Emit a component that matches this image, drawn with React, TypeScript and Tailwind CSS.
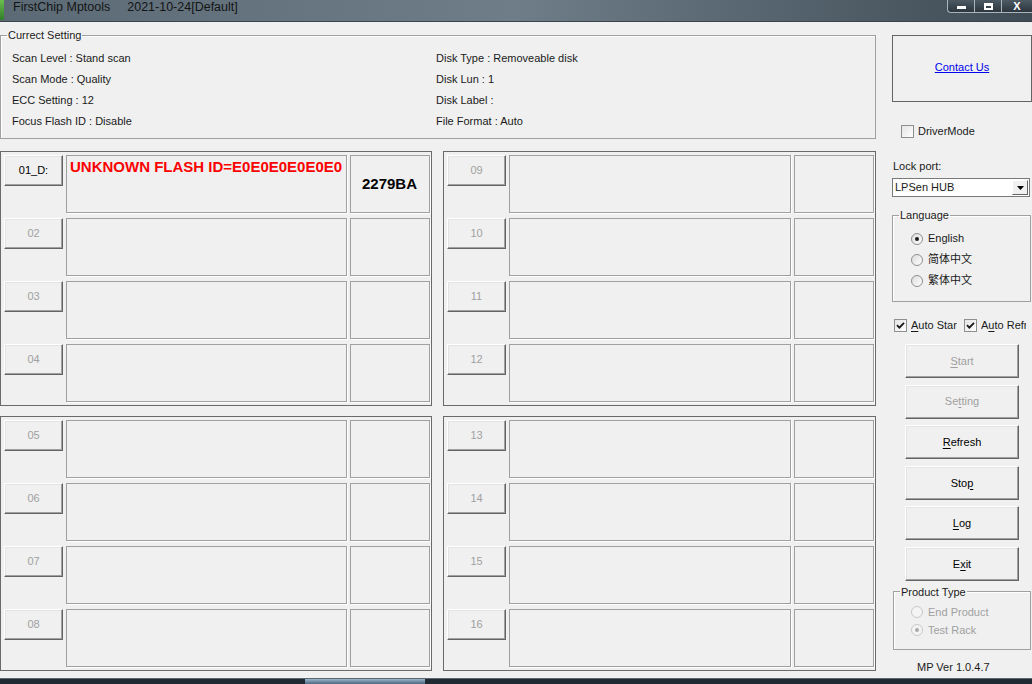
import React from "react";

const FONT = "font-['Liberation_Sans',Arial,sans-serif]";

const CheckBox = ({ checked }: { checked?: boolean }) => (
  <span className="flex h-[13px] w-[13px] shrink-0 items-center justify-center border border-[#8e8f8f] bg-gradient-to-br from-[#e4e4e4] to-white">
    {checked && (
      <svg width="9" height="9" viewBox="0 0 9 9">
        <path d="M1 4.2 L3.4 6.6 L8 1.8" stroke="#1a1a1a" strokeWidth="1.9" fill="none" />
      </svg>
    )}
  </span>
);

const Radio = ({ checked, disabled }: { checked?: boolean; disabled?: boolean }) => (
  <span
    className={`flex h-[12px] w-[12px] shrink-0 items-center justify-center rounded-full border ${
      disabled ? "border-[#c8c8c8] bg-[#f4f4f4]" : "border-[#8e8f8f] bg-gradient-to-br from-[#dcdcdc] to-white"
    }`}
  >
    {checked && (
      <span className={`h-[4px] w-[4px] rounded-full ${disabled ? "bg-[#a8a8a8]" : "bg-[#1c1c1c]"}`} />
    )}
  </span>
);

const RaisedButton = ({
  children,
  disabled,
  className,
}: {
  children: React.ReactNode;
  disabled?: boolean;
  className?: string;
}) => (
  <div
    className={`flex items-center justify-center border-t border-l border-white border-r border-b border-r-[#646464] border-b-[#646464] bg-[#f0f0f0] shadow-[inset_-1px_-1px_0_#a0a0a0,inset_1px_1px_0_#e3e3e3] text-[11px] ${
      disabled ? "text-[#a0a0a0]" : "text-black"
    } ${className ?? ""}`}
  >
    {children}
  </div>
);

const Cell = ({ className, children }: { className?: string; children?: React.ReactNode }) => (
  <div
    className={`h-[58px] border border-[#a0a0a0] shadow-[1px_1px_0_#ffffff] ${className ?? ""}`}
  >
    {children}
  </div>
);

const PortRow = ({ label, active }: { label: string; active?: boolean }) => (
  <div className="flex gap-[3px]">
    <RaisedButton disabled={!active} className="h-[31px] w-[59px]">
      {label}
    </RaisedButton>
    <Cell className="flex-1 overflow-hidden px-[3px] pt-[2px]">
      {active && (
        <div className="whitespace-nowrap text-[15px] font-bold leading-[18px] text-[#ff0000]">
          UNKNOWN FLASH ID=E0E0E0E0E0E0
        </div>
      )}
    </Cell>
    <Cell className="w-[80px]">
      {active && (
        <div className="pl-[11px] pt-[19px] text-[15px] font-bold leading-[18px] text-black">2279BA</div>
      )}
    </Cell>
  </div>
);

const Panel = ({ ports }: { ports: { label: string; active?: boolean }[] }) => (
  <div className="flex h-[255px] flex-col gap-[5px] border border-[#6a6a6a] p-[3px] pr-[1px]">
    {ports.map((p) => (
      <PortRow key={p.label} label={p.label} active={p.active} />
    ))}
  </div>
);

const u = (s: string) => <span className="underline underline-offset-[2px]">{s}</span>;

export default function App() {
  const settingsLeft = [
    "Scan Level : Stand scan",
    "Scan Mode : Quality",
    "ECC Setting : 12",
    "Focus Flash ID : Disable",
  ];
  const settingsRight = ["Disk Type : Removeable disk", "Disk Lun : 1", "Disk Label :", "File Format : Auto"];

  return (
    <div className={`flex h-[684px] w-[1032px] flex-col overflow-hidden bg-[#f0f0f0] ${FONT} text-[11px] text-[#1a1a1a]`}>
      {/* title bar */}
      <div className="relative flex h-[22px] shrink-0 items-start border-b border-[#3a444c] bg-gradient-to-r from-[#5b6a75] via-[#6f7d88] to-[#3f4c56]">
        <div className="h-[20px] w-[4px] bg-gradient-to-b from-[#6bbf4e] to-[#2f7d2a]" />
        <div className="ml-[9px] flex gap-[17px] text-[12.5px] leading-[15px] text-[#141414]">
          <span>FirstChip Mptools</span>
          <span>2021-10-24[Default]</span>
        </div>
        <div className="absolute right-0 top-0 flex h-[13px] rounded-bl-[4px] border-b border-l border-[#a9b4bc] bg-gradient-to-b from-[#4d5a64] to-[#2c363e]">
          <div className="flex w-[27px] items-center justify-center border-r border-[#a9b4bc]">
            <span className="mt-[3px] h-[3px] w-[9px] bg-white" />
          </div>
          <div className="flex w-[27px] items-center justify-center border-r border-[#a9b4bc]">
            <span className="h-[7px] w-[9px] border-[2px] border-t-[3px] border-white" />
          </div>
          <div className="flex w-[30px] items-center justify-center text-[11px] font-bold leading-none text-white">
            X
          </div>
        </div>
      </div>

      {/* body */}
      <div className="flex flex-1">
        {/* left column */}
        <div className="flex w-[876px] flex-col">
          <fieldset className="mt-[6px] h-[111px] border border-[#a0a0a0] shadow-[inset_1px_1px_0_#ffffff]">
            <legend className="ml-[6px] px-[1px] text-[11px] leading-[14px]">Currect Setting</legend>
            <div className="grid grid-cols-[424px_1fr] pl-[11px] pt-[6px]">
              <div className="flex flex-col">
                {settingsLeft.map((t) => (
                  <div key={t} className="h-[21px] leading-[21px]">
                    {t}
                  </div>
                ))}
              </div>
              <div className="flex flex-col">
                {settingsRight.map((t) => (
                  <div key={t} className="h-[21px] leading-[21px]">
                    {t}
                  </div>
                ))}
              </div>
            </div>
          </fieldset>

          <div className="mt-[12px] grid grid-cols-[432px_433px] gap-x-[11px] gap-y-[10px]">
            <Panel ports={[{ label: "01_D:", active: true }, { label: "02" }, { label: "03" }, { label: "04" }]} />
            <Panel ports={[{ label: "09" }, { label: "10" }, { label: "11" }, { label: "12" }]} />
            <Panel ports={[{ label: "05" }, { label: "06" }, { label: "07" }, { label: "08" }]} />
            <Panel ports={[{ label: "13" }, { label: "14" }, { label: "15" }, { label: "16" }]} />
          </div>
        </div>

        {/* right column */}
        <div className="ml-[16px] flex w-[140px] flex-col">
          <div className="mt-[13px] flex h-[67px] w-[140px] items-center justify-center border border-[#646464]">
            <span className="mb-[3px] text-[11px] text-[#0000ee] underline">Contact Us</span>
          </div>

          <div className="ml-[9px] mt-[22px] flex h-[14px] items-center gap-[4px]">
            <CheckBox />
            <span>DriverMode</span>
          </div>

          <div className="ml-[1px] mt-[21px] h-[14px] leading-[14px]">Lock port:</div>

          <div className="mt-[5px] flex h-[19px] w-[138px] items-center border border-[#7a7a7a] bg-white pl-[2px]">
            <span className="flex-1 leading-[17px]">LPSen HUB</span>
            <div className="mr-[1px] flex h-[15px] w-[16px] items-center justify-center border-t border-l border-white border-r border-b border-r-[#646464] border-b-[#646464] bg-[#f0f0f0]">
              <svg width="7" height="4" viewBox="0 0 7 4">
                <path d="M0 0 H7 L3.5 4 Z" fill="#000" />
              </svg>
            </div>
          </div>

          <fieldset className="mt-[11px] h-[94px] w-[139px] border border-[#a0a0a0] shadow-[inset_1px_1px_0_#ffffff]">
            <legend className="ml-[6px] px-[1px] leading-[14px]">Language</legend>
            <div className="flex flex-col pl-[18px] pt-[6px]">
              {[
                { t: "English", c: true },
                { t: "简体中文" },
                { t: "繁体中文" },
              ].map((r) => (
                <div key={r.t} className="flex h-[21px] items-center gap-[5px]">
                  <Radio checked={r.c} />
                  <span className="font-['Liberation_Sans','Noto_Sans_CJK_SC',sans-serif] text-[11px]">{r.t}</span>
                </div>
              ))}
            </div>
          </fieldset>

          <div className="ml-[2px] mt-[16px] flex h-[14px] items-center whitespace-nowrap">
            <CheckBox checked />
            <span className="ml-[4px] w-[46px] overflow-hidden">{u("A")}uto Start</span>
            <span className="ml-[7px]">
              <CheckBox checked />
            </span>
            <span className="ml-[4px] w-[45px] overflow-hidden">
              A{u("u")}to Refresh
            </span>
          </div>

          <div className="ml-[13px] mt-[12px] flex flex-col gap-[6.6px]">
            <RaisedButton disabled className="h-[34px] w-[114px]">
              {u("S")}tart
            </RaisedButton>
            <RaisedButton disabled className="h-[34px] w-[114px]">
              Se{u("t")}ting
            </RaisedButton>
            <RaisedButton className="h-[34px] w-[114px]">{u("R")}efresh</RaisedButton>
            <RaisedButton className="h-[34px] w-[114px]">Sto{u("p")}</RaisedButton>
            <RaisedButton className="h-[34px] w-[114px]">{u("L")}og</RaisedButton>
            <RaisedButton className="h-[34px] w-[114px]">E{u("x")}it</RaisedButton>
          </div>

          <fieldset className="ml-[1px] mt-[4px] h-[65px] w-[138px] border border-[#a0a0a0] shadow-[inset_1px_1px_0_#ffffff]">
            <legend className="ml-[6px] px-[1px] leading-[14px]">Product Type</legend>
            <div className="flex flex-col pl-[17px] pt-[4px] text-[#a0a0a0]">
              <div className="flex h-[18px] items-center gap-[5px]">
                <Radio disabled />
                <span>End Product</span>
              </div>
              <div className="flex h-[18px] items-center gap-[5px]">
                <Radio checked disabled />
                <span>Test Rack</span>
              </div>
            </div>
          </fieldset>

          <div className="ml-[25px] mt-[10px] h-[14px] leading-[14px]">MP Ver 1.0.4.7</div>
        </div>
      </div>

      {/* taskbar strip */}
      <div className="flex h-[6px] shrink-0 border-t border-[#5b6670] bg-[#1f2a33]">
        <div className="ml-[305px] w-[120px] bg-gradient-to-b from-[#9fb6cc] to-[#4d6880]" />
      </div>
    </div>
  );
}
